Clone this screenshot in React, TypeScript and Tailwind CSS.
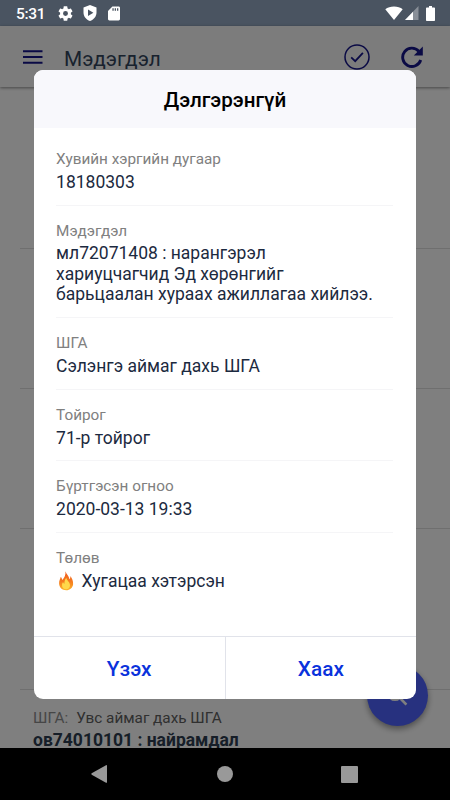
import React from 'react';

interface Field {
  label: string;
  value: React.ReactNode;
}

const FlameIcon: React.FC = () => (
  <svg width="18" height="20" viewBox="0 0 18 20" className="shrink-0">
    <defs>
      <linearGradient id="flame" x1="0" y1="0" x2="0" y2="1">
        <stop offset="0" stopColor="#ef5a20" />
        <stop offset="0.55" stopColor="#f57c1f" />
        <stop offset="1" stopColor="#fdb52b" />
      </linearGradient>
    </defs>
    <path
      d="M9.4 0.3C10.2 3 13 5 13.5 8.3C14.2 7.6 14.5 6.3 14.3 4.9C16 7 17.4 10 17.1 13.2C16.8 16.6 14 19.2 10.2 19.2C6.2 19.2 3.3 16.6 3.1 12.8C2.9 10 4.2 8.2 4.8 5.8C5.6 6.8 6 7.8 6.2 9C8.3 6.8 10 4 9.4 0.3Z"
      fill="url(#flame)"
    />
    <path
      d="M10.4 6.8C10.5 9.4 13.9 10.8 14 14.2C14 16.8 12.3 18.3 10.1 18.3C7.7 18.3 6 16.6 6 14.2C6 12.8 6.5 11.8 7.1 11C7.4 12 7.9 12.5 8.5 12.7C8.3 10.6 8.9 8.4 10.4 6.8Z"
      fill="#ffd84a"
    />
  </svg>
);

const fields: Field[] = [
  { label: 'Хувийн хэргийн дугаар', value: '18180303' },
  {
    label: 'Мэдэгдэл',
    value: (
      <>
        мл72071408 : нарангэрэл
        <br />
        хариуцчагчид Эд хөрөнгийг
        <br />
        барьцаалан хураах ажиллагаа хийлээ.
      </>
    ),
  },
  { label: 'ШГА', value: 'Сэлэнгэ аймаг дахь ШГА' },
  { label: 'Тойрог', value: '71-р тойрог' },
  { label: 'Бүртгэсэн огноо', value: '2020-03-13 19:33' },
  {
    label: 'Төлөв',
    value: (
      <span className="flex items-center gap-[7.5px]">
        <FlameIcon />
        Хугацаа хэтэрсэн
      </span>
    ),
  },
];

const StatusBar: React.FC = () => (
  <div className="flex h-[26px] shrink-0 items-center justify-between bg-[#4a5461] pl-4 pr-[15px] text-white">
    <div className="flex items-center">
      <span className="w-[42px] pt-px text-[15.5px] font-medium leading-[26px] tracking-[-0.3px]">5:31</span>
      <svg width="15" height="15" viewBox="2 2 20 20" fill="currentColor">
        <path d="M19.14 12.94c.04-.3.06-.61.06-.94 0-.32-.02-.64-.07-.94l2.03-1.58a.49.49 0 0 0 .12-.61l-1.92-3.32a.49.49 0 0 0-.59-.22l-2.39.96c-.5-.38-1.03-.7-1.62-.94l-.36-2.54a.48.48 0 0 0-.48-.41h-3.84c-.24 0-.43.17-.47.41l-.36 2.54c-.59.24-1.13.57-1.62.94l-2.39-.96a.49.49 0 0 0-.59.22L2.74 8.87c-.12.21-.08.47.12.61l2.03 1.58c-.05.3-.09.63-.09.94s.02.64.07.94l-2.03 1.58a.49.49 0 0 0-.12.61l1.92 3.32c.12.22.37.29.59.22l2.39-.96c.5.38 1.03.7 1.62.94l.36 2.54c.05.24.24.41.48.41h3.84c.24 0 .44-.17.47-.41l.36-2.54c.59-.24 1.13-.56 1.62-.94l2.39.96c.22.08.47 0 .59-.22l1.92-3.32a.49.49 0 0 0-.12-.61zM12 15.3a3.3 3.3 0 1 1 0-6.6 3.3 3.3 0 0 1 0 6.6z" />
      </svg>
      <svg width="14" height="16" viewBox="0 0 14 16" className="ml-[9.5px]" fill="currentColor">
        <path fillRule="evenodd" d="M7 0L13.5 2.5V7.5C13.5 11.5 10.7 14.8 7 16C3.3 14.8 0.5 11.5 0.5 7.5V2.5ZM5 4.5V11L10.4 7.8Z" />
      </svg>
      <svg width="12" height="15" viewBox="0 0 12 15" className="ml-[11.5px]" fill="currentColor">
        <path fillRule="evenodd" d="M4.4 0.5H10.6C11.4 0.5 12 1.1 12 1.9V13.1C12 13.9 11.4 14.5 10.6 14.5H1.4C0.6 14.5 0 13.9 0 13.1V4.9ZM4.4 2.2V4.8H5.7V2.2ZM6.7 2.2V4.8H8V2.2ZM9 2.2V4.8H10.3V2.2Z" />
      </svg>
    </div>
    <div className="flex items-center">
      <svg width="18" height="15" viewBox="0 0 18 15" fill="currentColor">
        <path d="M9 14L0.3 3.3C2.6 1.5 5.6 0.5 9 0.5S15.4 1.5 17.7 3.3Z" />
      </svg>
      <svg width="14" height="14" viewBox="0 0 14 14" className="ml-[2px]" fill="currentColor">
        <path d="M13.5 0V14H0Z" opacity="0.35" />
        <path d="M8 5.7V14H0Z" />
      </svg>
      <svg width="9" height="15" viewBox="0 0 9 15" className="ml-[7px]" fill="currentColor">
        <path d="M3 0H6V1.5H8.2Q9 1.5 9 2.3V14.2Q9 15 8.2 15H0.8Q0 15 0 14.2V2.3Q0 1.5 0.8 1.5H3Z" />
      </svg>
    </div>
  </div>
);

const AppBar: React.FC = () => (
  <header className="relative flex h-[61px] shrink-0 items-center bg-[#f8f8f8] pl-[23px] pr-[27px] text-[#15158a] shadow-[0_1px_3px_rgba(0,0,0,0.45)]">
    <svg width="20" height="14" viewBox="0 0 20 14" fill="currentColor">
      <path d="M0 0.3H19.5V2.3H0ZM0 6H19.5V8H0ZM0 11.7H19.5V13.7H0Z" />
    </svg>
    <h1 className="ml-[21px] mt-[4px] flex-1 text-[20.8px] leading-[26px] text-[#33445c]">Мэдэгдэл</h1>
    <svg width="26" height="26" viewBox="0 0 26 26" fill="none" stroke="currentColor" strokeWidth="1.5">
      <circle cx="13" cy="13" r="12" />
      <path d="M7.2 13.4L11.2 17.2L18.9 8.8" strokeWidth="1.8" />
    </svg>
    <svg width="22" height="22" viewBox="0 0 22 22" className="ml-[31px]" fill="none">
      <path d="M17.8 5.2A9.2 9.2 0 1 0 19.7 14" stroke="currentColor" strokeWidth="2.9" />
      <path d="M21.8 0.6V9.6H12.8Z" fill="currentColor" />
    </svg>
  </header>
);

const NoticeList: React.FC = () => (
  <div className="flex-1 overflow-hidden bg-white pl-5">
    <div className="h-[162px] border-b border-[#dedede]" />
    <div className="h-[140px] border-b border-[#dedede]" />
    <div className="h-[140px] border-b border-[#dedede]" />
    <div className="h-[161px] border-b border-[#dedede]" />
    <div className="pl-[13px] pt-[17.5px]">
      <p className="text-[15.3px] leading-[20px] text-[#606060]">
        <span className="mr-[8px] text-[#8d8d8d]">ШГА:</span>
        Увс аймаг дахь ШГА
      </p>
      <p className="mt-[2.5px] text-[17.5px] font-bold leading-[21px] text-[#2d3d50]">
        ов74010101 : найрамдал
      </p>
    </div>
  </div>
);

const DetailDialog: React.FC = () => (
  <div className="flex h-[629.5px] w-[382.5px] flex-col overflow-hidden rounded-[9px] bg-white">
    <h2 className="h-[58px] shrink-0 bg-[#f8f8fc] text-center text-[20.6px] font-medium leading-[60px] text-black">
      Дэлгэрэнгүй
    </h2>
    <div className="flex-1 pl-[22.3px] pr-[23px] pt-[6.5px]">
      {fields.map((field) => (
        <div key={field.label} className="border-b border-[#f5f5f7] pb-[12.2px] pt-[16.2px] last:border-0">
          <div className="text-[15.3px] leading-[18px] text-[#808080]">{field.label}</div>
          <div className="mt-[3.7px] whitespace-nowrap text-[17.5px] leading-[20.5px] text-[#1c2a40]">
            {field.value}
          </div>
        </div>
      ))}
    </div>
    <div className="flex h-[63px] shrink-0 border-t border-[#e1e3ea] text-[20.8px] font-medium text-[#0a32dc]">
      <button className="flex-1 border-r border-[#e1e3ea] pt-[4px]">Үзэх</button>
      <button className="flex-1 pt-[4px]">Хаах</button>
    </div>
  </div>
);

const NavBar: React.FC = () => (
  <div className="flex h-[52px] shrink-0 items-center bg-black pl-[91px] text-[#999999]">
    <svg width="16" height="18" viewBox="0 0 16 18" fill="currentColor">
      <path d="M15 0.2Q16 -0.2 16 0.8V17.2Q16 18.2 15 17.7L0.7 9.7Q0 9 0.7 8.3Z" />
    </svg>
    <div className="ml-[110px] h-4 w-4 rounded-full bg-[#999999]" />
    <div className="ml-[108px] h-[17px] w-[17px] rounded-[1px] bg-[#999999]" />
  </div>
);

export default function App() {
  return (
    <div className="flex h-[800px] w-[450px] flex-col overflow-hidden bg-black font-[Roboto,'Noto_Sans',sans-serif]">
      <StatusBar />
      <main className="relative flex min-h-0 flex-1 flex-col">
        <AppBar />
        <NoticeList />
        <button className="absolute bottom-[22px] right-[22px] flex h-[61px] w-[61px] items-center justify-center rounded-full bg-[#4f62ff] shadow-[0_3px_6px_rgba(0,0,0,0.4)]">
          <svg width="20" height="20" viewBox="0 0 20 20" fill="none" stroke="#fff" strokeWidth="2.6">
            <circle cx="7" cy="7.6" r="6.2" />
            <path d="M11 11L18.4 18.6" />
          </svg>
        </button>
        <div className="absolute inset-0 flex justify-center bg-black/50 pt-[43.5px]">
          <DetailDialog />
        </div>
      </main>
      <NavBar />
    </div>
  );
}
